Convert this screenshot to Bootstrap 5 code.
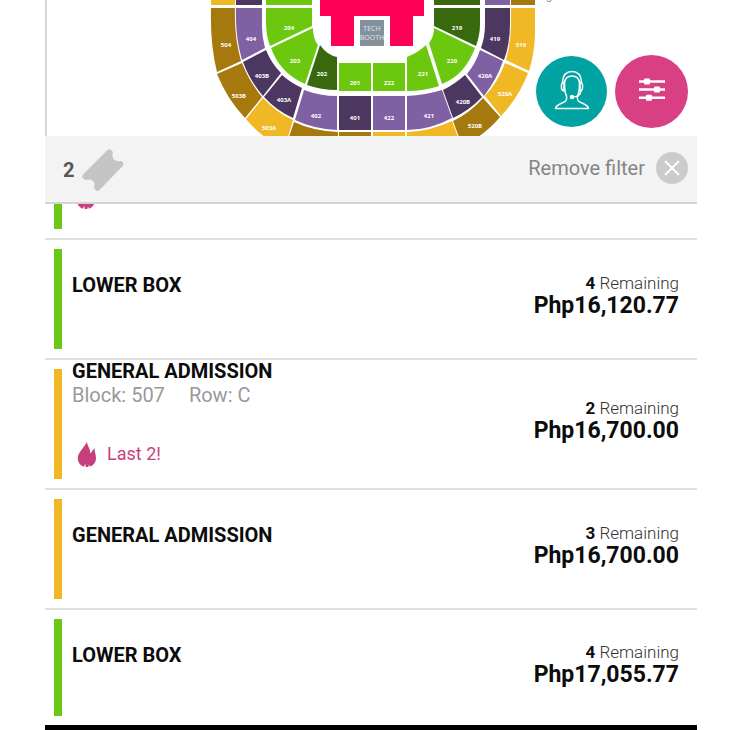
<!DOCTYPE html>
<html lang="en">
<head>
<meta charset="utf-8">
<meta name="viewport" content="width=device-width, initial-scale=1">
<title>Ticket selection</title>
<link href="https://cdn.jsdelivr.net/npm/bootstrap@5.3.0/dist/css/bootstrap.min.css" rel="stylesheet">
<style>
  body { font-family: Roboto, "Liberation Sans", sans-serif; color: #0c0c0c; background: #fff; }
  .app-shell { margin-left: 45px; margin-right: 33px; height: 100vh; }
  .seat-map { border-left: 2px solid #d8d8d8; height: 136px; }
  .seat-map svg.venue { height: 136px; }
  .venue text { font: 700 6px "Open Sans", sans-serif; fill: #fff; text-anchor: middle; }
  .venue .booth { font: 400 7px "Open Sans", sans-serif; fill: #dfe3e6; }
  .venue .note { font: 400 12px Roboto, sans-serif; fill: #999; }
  .map-actions { gap: 8px; padding: 0 9px 8px 0; }
  .round-btn { border: 0; border-radius: 50%; padding: 0; }
  .btn-support { width: 71px; height: 71px; background: #00a2a2; }
  .btn-tune { width: 73px; height: 73px; background: #d84083; }
  .filter-bar { height: 68px; background: #f3f3f3; border-bottom: 2px solid #d5d5d5; padding: 0 8px 2px 18px; }
  .qty { font-size: 20px; font-weight: 700; color: #555; gap: 8px; }
  .clear-btn { font-size: 20px; line-height: 24px; color: #858585; gap: 10px; }
  .offer { border-bottom: 2px solid #e1e1e1; padding: 0 18px 0 9px; min-height: 120px; }
  .offer-tall { min-height: 130px; }
  .offer-cut { min-height: 36px; height: 36px; }
  .offer-final { min-height: 115px; border-bottom: 0; }
  .offer-cut .stripe { margin-top: 0; }
  .offer-cut .flame { margin-bottom: 29px; }
  .stripe { width: 8px; margin: 9px 0; }
  .stripe-green { background: #6ac816; }
  .stripe-gold { background: #f2b727; }
  .offer-info { margin-left: 10px; margin-bottom: 4px; }
  .offer-final .offer-info { margin-bottom: 0; }
  .offer-name { font-size: 20px; line-height: 23px; font-weight: 700; }
  .offer-seat { font-size: 20px; line-height: 24px; min-height: 24px; color: #999; gap: 24px; }
  .offer-last { font-size: 18px; line-height: 24px; color: #c83f7f; gap: 10px; margin-top: 34px; padding-left: 5px; }
  .offer-cost { margin-bottom: 8px; }
  .offer-left { font-size: 17px; line-height: 22px; font-weight: 300; color: #333; }
  .offer-left b { font-weight: 700; color: #0c0c0c; }
  .offer-price { font-size: 23px; line-height: 24px; font-weight: 700; }
  .end-bar { background: #000; }
</style>
<script src="https://cdn.jsdelivr.net/npm/bootstrap@5.3.0/dist/js/bootstrap.bundle.min.js"></script>
</head>
<body>
<svg class="d-none" aria-hidden="true">
  <symbol id="flame" viewBox="0 0 20 26"><path fill="#c83f7f" d="M10 .5C10 4 12 6 12.800 9L13.500 12.500 17.500 7C17.500 10.500 19.200 14 19 18 18.500 22 16 24.500 13 25.700L12 23.500 11.300 25.900H8.700L8.200 22.500 7 25.700C3.500 24.500 .8 21.500 .8 17.500 .8 12.500 4 10 6 6.800 7.500 4.700 9.500 2.500 10 .5Z"/></symbol>
</svg>
<main class="app-shell d-flex flex-column overflow-hidden">
  <section class="seat-map position-relative flex-shrink-0 overflow-hidden" aria-label="Seat map">
    <svg class="venue d-block w-100" viewBox="47 0 650 136" role="img" aria-label="Venue sections">
      <g fill="#a6790e">
        <path d="M211 8H235Q234 36 241 61L217 72Q210 45 211 8ZM217 74 242 63Q250 83 262 97L245 118Q227 99 217 74ZM294 122Q313 131 338 132V137H289ZM339 132H371V137H339ZM453 121Q470 113 483 98L500 117Q490 129 478 137H459ZM511 0H535V5H511Z"/>
      </g>
      <g fill="#f1b826">
        <path d="M211 0H235V5H211ZM263 98Q277 113 293 120L288 137H265Q255 130 246 119ZM373 132H405V137H373ZM407 132Q431 131 452 121L458 137H407ZM485 96Q498 82 505 63L528 73Q519 97 501 116ZM511 8H535V36Q534 55 529 71L506 60Q511 42 511 24Z"/>
      </g>
      <g fill="#7e60a3">
        <path d="M236 8H262V27Q262 37 265 48L242 60Q235 36 236 8ZM304 90Q320 96 337 96V130Q314 129 295 120ZM373 96H405V130H373ZM407 96Q426 95 442 90L452 118Q430 130 407 130ZM480 50 503 61Q497 79 484 96L467 74Q476 63 480 50ZM485 0H510V5H485Z"/>
      </g>
      <g fill="#4b375f">
        <path d="M236 0H262V5H236ZM266 50Q271 63 281 73L263 96Q250 81 243 62ZM282 75Q291 83 302 88L293 118Q277 111 264 97ZM339 96H371V130H339ZM443 90Q455 84 465 75L482 97Q470 110 453 118ZM485 8H510V24Q510 44 504 60L481 48Q485 37 485 24Z"/>
      </g>
      <g fill="#6bc80f">
        <path d="M266 0H312V5H266ZM266 8H312V26L270 46Q266 35 266 22ZM271 48 313 28Q313 39 318 45L305 84Q280 73 271 48ZM339 63H371V91H339ZM373 63H405V91H373ZM407 57Q419 52 426 45L439 86Q425 91 407 91ZM434 28 475 48Q465 75 442 84L429 43Q434 37 434 28Z"/>
      </g>
      <path fill="#38690c" d="M320 45Q327 55 337 57V90Q321 90 307 85ZM434 0H480V5H434ZM434 8H480V24Q480 35 476 46L434 26Z"/>
      <path fill="#ff0057" d="M320 0H424V16H413V46H390V16H354V46H331V16H320Z"/>
      <path fill="#84919d" d="M360 20H384V46H360Z"/>
      <text class="booth" x="372" y="31">TECH</text><text class="booth" x="372" y="40">BOOTH</text>
      <text x="226" y="47">504</text><text x="251" y="41">404</text><text x="289" y="30">204</text>
      <text x="295" y="63">203</text><text x="322" y="76">202</text><text x="355" y="85">201</text>
      <text x="389" y="85">222</text><text x="423" y="76">221</text><text x="452" y="63">220</text>
      <text x="457" y="30">219</text><text x="495" y="41">419</text><text x="521" y="47">519</text>
      <text x="262" y="78">403B</text><text x="284" y="102">403A</text><text x="239" y="98">503B</text>
      <text x="269" y="130">503A</text><text x="316" y="118">402</text><text x="355" y="120">401</text>
      <text x="389" y="120">422</text><text x="429" y="118">421</text><text x="463" y="104">420B</text>
      <text x="485" y="78">420A</text><text x="505" y="96">520A</text><text x="475" y="128">520B</text>
      <text class="note" x="549" y="-1">g</text>
    </svg>
    <div class="map-actions position-absolute bottom-0 end-0 d-flex align-items-center">
      <button type="button" class="round-btn btn-support d-flex align-items-center justify-content-center" aria-label="Customer support">
        <svg width="36" height="44" viewBox="0 0 36 44" fill="none" stroke="#fff" stroke-width="1.500" stroke-linejoin="round" stroke-linecap="round">
          <path d="M12.500 26C10.500 22 10.500 18 10.500 13 11 8 14 6 18 6S25 8 25.500 13C25.500 18 25.500 22 23.500 26"/>
          <path d="M8.500 12C9 5 12 1.500 18 1.500S27 5 27.500 12"/>
          <path d="M10 12C6.500 12.500 6.500 20.500 10 21ZM26 12C29.500 12.500 29.500 20.500 26 21Z"/>
          <path d="M27 21C26.500 25 23 26.800 19 27"/><circle cx="18" cy="27" r="1.500" fill="#fff"/>
          <path d="M12.500 26C13.500 31 11 32 7 33.500 3.500 35 2 36 1.500 38.500H34.500C34 36 32.500 35 29 33.500 25 32 22.500 31 23.500 26"/>
        </svg>
      </button>
      <button type="button" class="round-btn btn-tune d-flex align-items-center justify-content-center" aria-label="Filters">
        <svg width="26" height="28" viewBox="0 0 26 28" fill="#fff">
          <path d="M0 2.300H26V4.700H0ZM0 10.300H26V12.700H0ZM0 18.600H26V21H0Z"/>
          <rect x="5" y=".5" width="6" height="6" rx="1"/><rect x="15" y="8.500" width="6" height="6" rx="1"/><rect x="7" y="16.800" width="6" height="6" rx="1"/>
        </svg>
      </button>
    </div>
  </section>

  <div class="filter-bar d-flex align-items-center justify-content-between flex-shrink-0">
    <div class="qty d-flex align-items-center"><span class="pt-1">2</span>
      <svg width="42" height="42" viewBox="0 0 42 42" class="mt-1" aria-hidden="true"><path fill="#c5c5c5" d="M25.500 1Q27.500-.7 29.500 1.200L31 3Q29.500 8 32 10.500T39 12L40.500 13Q42.500 15 40.700 17L17.500 41Q15.500 42.800 13.500 41L11.800 39Q13.500 34.500 11 32T3.500 31L1.200 29.500Q-.7 27.500 1 25.500Z"/></svg>
    </div>
    <button type="button" class="clear-btn btn p-0 border-0 d-flex align-items-center">Remove filter
      <svg width="34" height="34" viewBox="0 0 34 34" aria-hidden="true"><circle cx="17" cy="17" r="16" fill="#cbcbcb"/><path d="M10 10 24 24M24 10 10 24" stroke="#fff" stroke-width="2"/></svg>
    </button>
  </div>

  <ul class="list-unstyled mb-0">
    <li class="offer offer-cut d-flex overflow-hidden">
      <div class="stripe stripe-green"></div>
      <div class="offer-info d-flex align-items-end ps-1 mb-0"><svg class="flame flex-shrink-0" width="20" height="26" aria-hidden="true"><use href="#flame"/></svg></div>
    </li>
    <li class="offer d-flex">
      <div class="stripe stripe-green"></div>
      <div class="offer-info flex-grow-1 align-self-center"><h2 class="offer-name mb-0">LOWER BOX</h2><div class="offer-seat"></div></div>
      <div class="offer-cost align-self-center text-end"><div class="offer-left"><b>4</b> Remaining</div><div class="offer-price">Php16,120.77</div></div>
    </li>
    <li class="offer offer-tall d-flex">
      <div class="stripe stripe-gold"></div>
      <div class="offer-info flex-grow-1"><h2 class="offer-name mb-0">GENERAL ADMISSION</h2>
        <div class="offer-seat d-flex"><span>Block: 507</span><span>Row: C</span></div>
        <div class="offer-last d-flex align-items-center"><svg width="20" height="26" aria-hidden="true"><use href="#flame"/></svg><span>Last 2!</span></div>
      </div>
      <div class="offer-cost align-self-center text-end"><div class="offer-left"><b>2</b> Remaining</div><div class="offer-price">Php16,700.00</div></div>
    </li>
    <li class="offer d-flex">
      <div class="stripe stripe-gold"></div>
      <div class="offer-info flex-grow-1 align-self-center"><h2 class="offer-name mb-0">GENERAL ADMISSION</h2><div class="offer-seat"></div></div>
      <div class="offer-cost align-self-center text-end"><div class="offer-left"><b>3</b> Remaining</div><div class="offer-price">Php16,700.00</div></div>
    </li>
    <li class="offer offer-final d-flex">
      <div class="stripe stripe-green"></div>
      <div class="offer-info flex-grow-1 align-self-center"><h2 class="offer-name mb-0">LOWER BOX</h2><div class="offer-seat"></div></div>
      <div class="offer-cost align-self-center text-end"><div class="offer-left"><b>4</b> Remaining</div><div class="offer-price">Php17,055.77</div></div>
    </li>
  </ul>
  <div class="end-bar flex-grow-1"></div>
</main>
</body>
</html>
